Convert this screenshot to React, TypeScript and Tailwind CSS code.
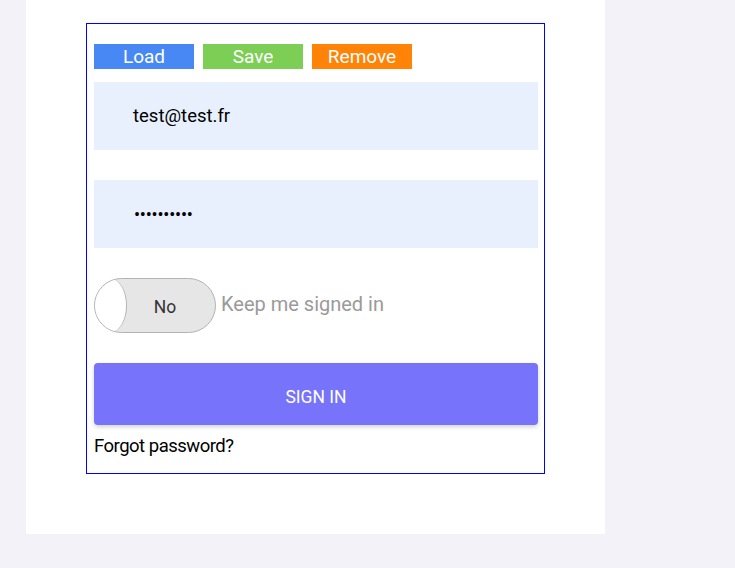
import React from "react";

export default function App() {
  return (
    <div
      className="min-h-screen w-full bg-[#f3f2f8]"
      style={{ fontFamily: "Roboto, 'Liberation Sans', sans-serif" }}
    >
      <div className="ml-[26px] h-[534px] w-[579px] bg-white pl-[60px] pt-[23px]">
        <div className="flex w-[459px] flex-col border border-[#0000ff] pb-[16px] pl-[7px] pr-[6px] pt-[20px]">
          <div className="flex gap-[9px]">
            <button className="h-[25px] w-[100px] bg-[#4788f4] text-[19px] leading-[25px] text-white">
              Load
            </button>
            <button className="h-[25px] w-[100px] bg-[#7dce55] text-[19px] leading-[25px] text-white">
              Save
            </button>
            <button className="h-[25px] w-[100px] bg-[#ff8307] text-[19px] leading-[25px] text-white">
              Remove
            </button>
          </div>
          <div className="mt-[13px] flex h-[68px] w-[444px] items-center bg-[#e8f0fe] pl-[39px] pt-[2px] text-[18.5px] text-black">
            test@test.fr
          </div>
          <div className="mt-[30px] flex h-[68px] w-[444px] items-center bg-[#e8f0fe] pl-[40px] text-[18px] text-black">
            <span className="tracking-[-0.2px]">••••••••••</span>
          </div>
          <div className="mt-[30px] flex items-center">
            <div className="relative flex h-[55px] w-[122px] items-center overflow-hidden rounded-full border border-[#b3b3b3] bg-[#e6e6e6]">
              <div className="h-full w-[32px] shrink-0 rounded-[50%] border-r border-[#b3b3b3] bg-white" />
              <span className="flex-1 pr-[12px] pt-[3px] text-center text-[17.5px] text-[#333]">No</span>
            </div>
            <span className="ml-[5px] pb-[4px] text-[20px] text-[#9a9a9a]">Keep me signed in</span>
          </div>
          <button className="mt-[30px] h-[62px] w-[444px] rounded-[4px] bg-[#7773fa] pt-[6px] text-[17.5px] text-white shadow-[0_2px_4px_rgba(0,0,0,0.18)]">
            SIGN IN
          </button>
          <div className="mt-[11px] text-[18.5px] leading-[21px] tracking-[-0.5px] text-black">
            Forgot password?
          </div>
        </div>
      </div>
    </div>
  );
}
